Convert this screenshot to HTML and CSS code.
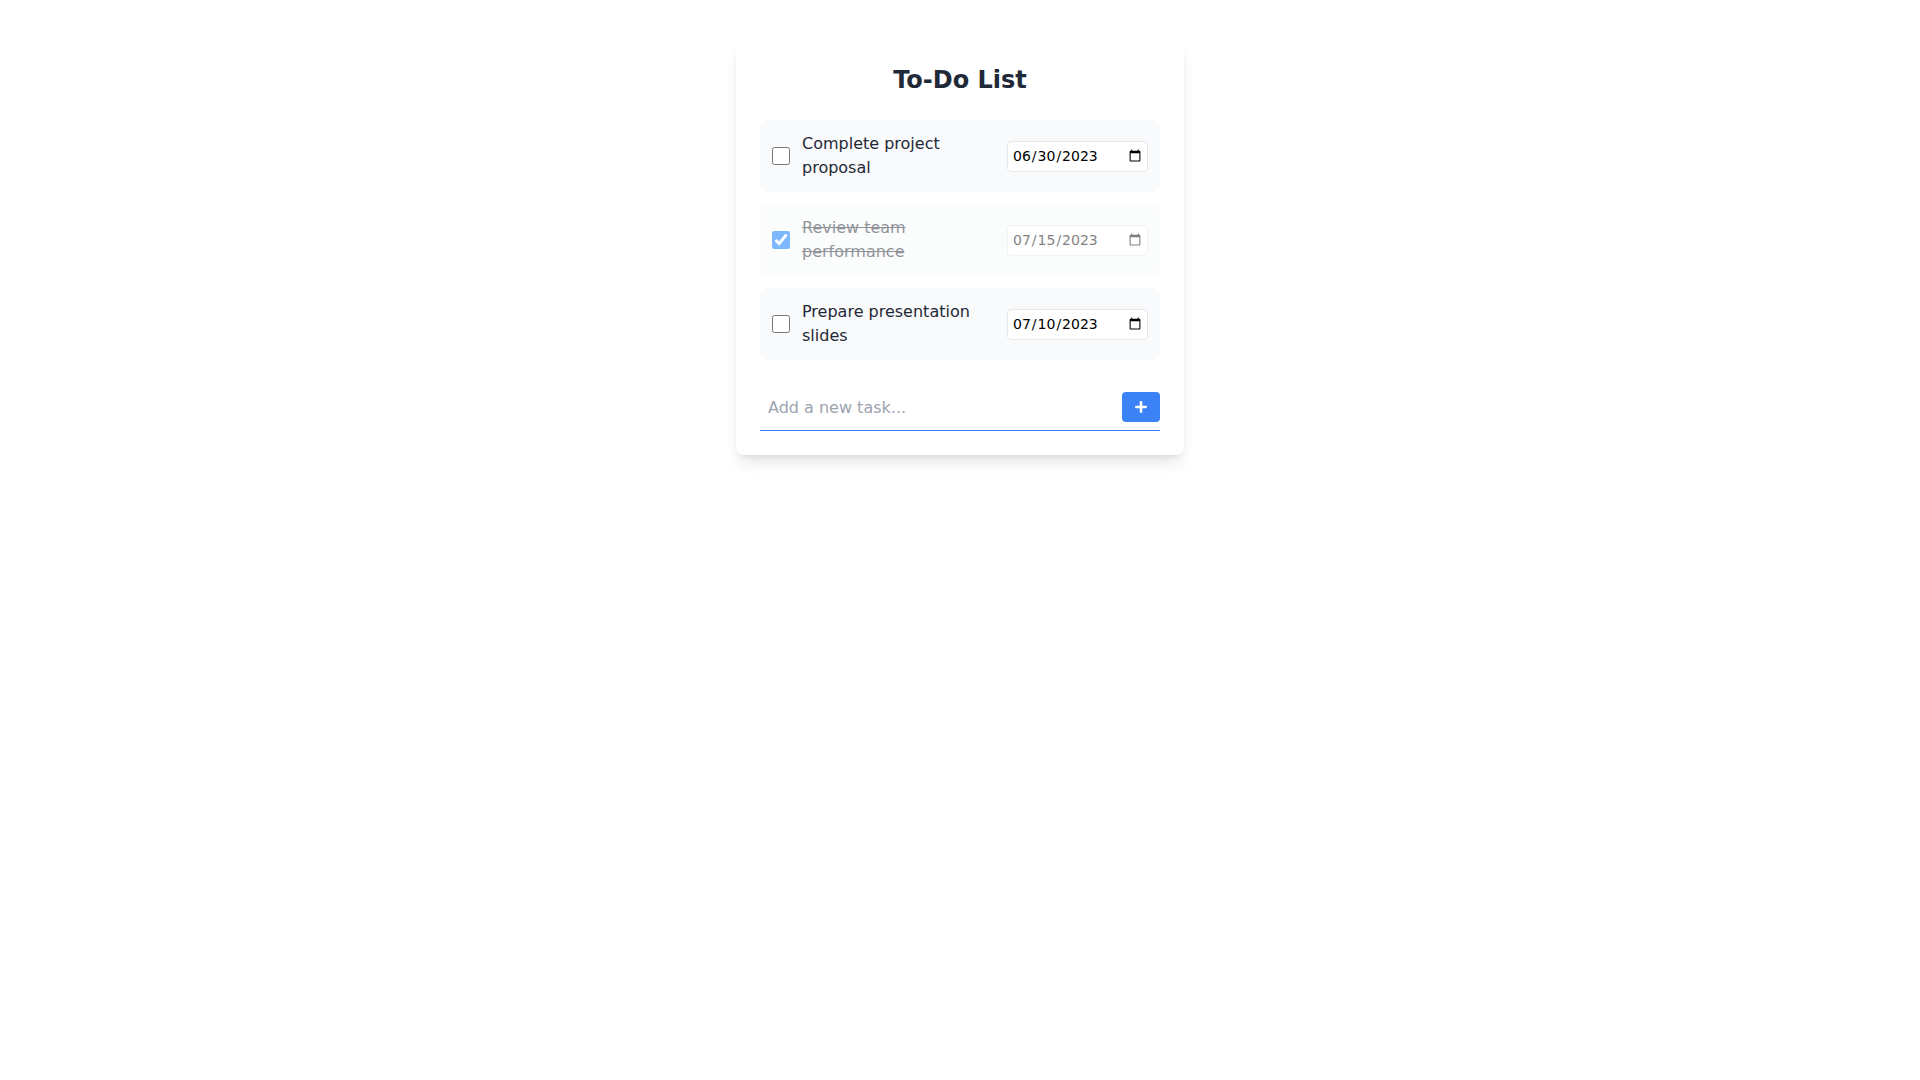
FILE: index.html
```html
<!DOCTYPE html>
<html lang="en">
<head>
  <meta charset="UTF-8">
  <title>To-Do List</title>
  <link rel="stylesheet" href="styles.css">
</head>
<body>
  <div class="card">
    <h1>To-Do List</h1>

    <ul class="task-list">
      <li class="task">
        <input type="checkbox" class="task-check">
        <span class="task-text">Complete project proposal</span>
        <input type="date" class="task-date" value="2023-06-30">
      </li>
      <li class="task done">
        <input type="checkbox" class="task-check" checked>
        <span class="task-text">Review team performance</span>
        <input type="date" class="task-date" value="2023-07-15">
      </li>
      <li class="task">
        <input type="checkbox" class="task-check">
        <span class="task-text">Prepare presentation slides</span>
        <input type="date" class="task-date" value="2023-07-10">
      </li>
    </ul>

    <form class="add-row" onsubmit="return false;">
      <input type="text" class="add-input" placeholder="Add a new task...">
      <button type="submit" class="add-btn" aria-label="Add task">
        <svg width="12" height="12" viewBox="0 0 12 12">
          <path d="M6 1.3v9.4M1.3 6h9.4" stroke="#fff" stroke-width="2.6" stroke-linecap="round" fill="none"/>
        </svg>
      </button>
    </form>
  </div>
</body>
</html>
```

FILE: styles.css
```css
body {
  font-family: 'DejaVu Sans', sans-serif;
  background-color: #fff;
  color: #1f2937;
  margin: 0;
  padding: 40px 0;
}
.card {
  width: 448px;
  margin: 0 auto;
  box-sizing: border-box;
  padding: 24px;
  background-color: #fff;
  border-radius: 8px;
  box-shadow: 0 10px 15px -3px rgba(0, 0, 0, 0.1), 0 4px 6px -4px rgba(0, 0, 0, 0.1);
}
h1 {
  margin: 0 0 24px;
  font-size: 24px;
  line-height: 32px;
  font-weight: bold;
  text-align: center;
  color: #1f2937;
}
.task-list {
  list-style: none;
  margin: 0;
  padding: 0;
  display: flex;
  flex-direction: column;
  gap: 12px;
}
.task {
  display: flex;
  align-items: center;
  padding: 12px;
  background-color: #f9fafb;
  border-radius: 8px;
}
.task.done {
  opacity: 0.5;
}
.task-check {
  width: 18px;
  height: 18px;
  margin: 0 12px 0 0;
  flex-shrink: 0;
}
.task-text {
  flex: 1;
  font-size: 16px;
  line-height: 24px;
  color: #1f2937;
}
.task.done .task-text {
  text-decoration: line-through;
}
.task-date {
  margin-left: 16px;
  width: 141px;
  height: 31px;
  box-sizing: border-box;
  padding: 4px 3px 4px 4px;
  font-family: 'DejaVu Sans', sans-serif;
  font-size: 14px;
  color: #000;
  background-color: #fff;
  border: 1px solid #e5e7eb;
  border-radius: 4px;
}
.add-row {
  display: flex;
  align-items: center;
  margin: 24px 0 0;
  padding: 8px 0;
  border-bottom: 1px solid #3b82f6;
}
.add-input {
  flex: 1;
  height: 30px;
  padding: 0 8px;
  border: none;
  outline: none;
  font-family: 'DejaVu Sans', sans-serif;
  font-size: 16px;
  color: #1f2937;
  background: transparent;
}
.add-input::placeholder {
  color: #9ca3af;
}
.add-btn {
  width: 38px;
  height: 30px;
  display: flex;
  align-items: center;
  justify-content: center;
  padding: 0;
  border: none;
  border-radius: 4px;
  background-color: #3b82f6;
  cursor: pointer;
}
```
